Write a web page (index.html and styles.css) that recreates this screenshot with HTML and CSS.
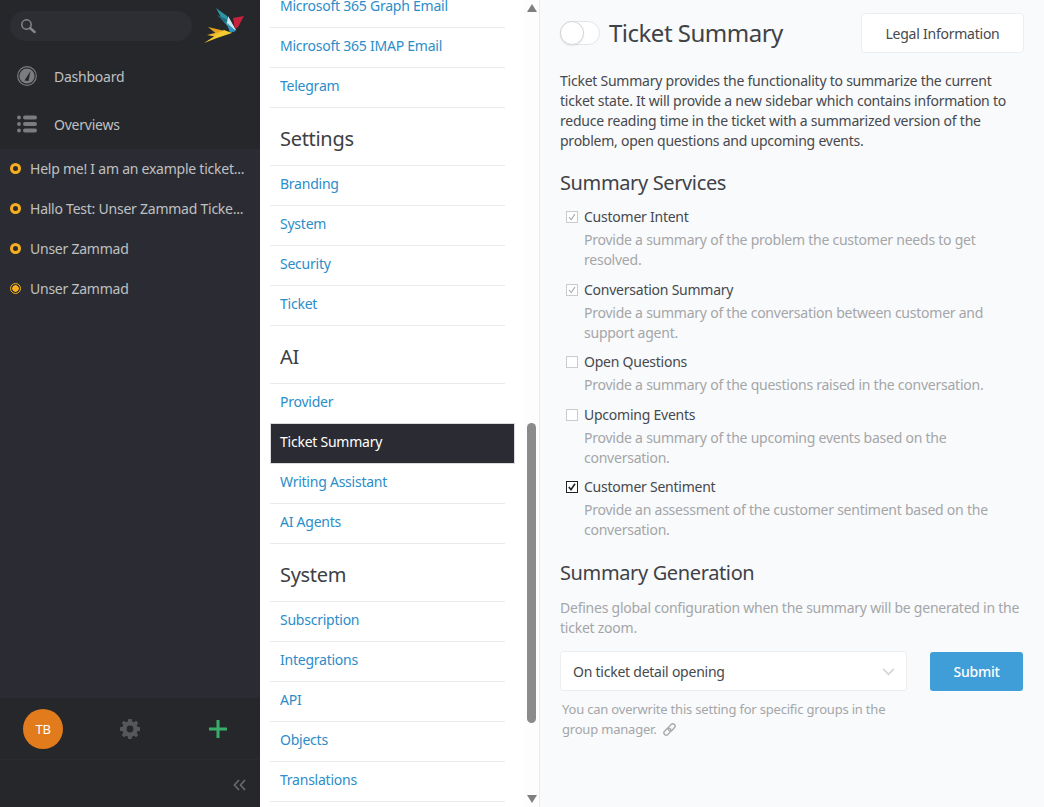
FILE: index.html
```html
<!DOCTYPE html>
<html lang="en">
<head>
<meta charset="utf-8">
<title>Ticket Summary</title>
<link rel="stylesheet" href="styles.css">
</head>
<body>
<div class="app">
  <aside class="sidebar">
    <div class="side-top">
      <div class="search-row">
        <div class="search">
          <svg class="search-icon" viewBox="0 0 16 16" width="16" height="16"><circle cx="6.500" cy="6.500" r="4.700" fill="none" stroke="#85878a" stroke-width="1.500"/><path d="M10 10l4.600 4" stroke="#85878a" stroke-width="2.400" stroke-linecap="round"/></svg>
        </div>
        <svg class="logo" viewBox="0 0 42 38" width="42" height="38">
          <path d="M13 1l11 8 3 13-7-8z" fill="#2d95a6"/>
          <path d="M14 8l11 5-3 3z" fill="#1c6f80"/>
          <path d="M25 9l8 14-6 1-3-8z" fill="#cfe8f2"/>
          <path d="M24 16l9 8-6 2z" fill="#2a94bd"/>
          <path d="M30 11l11-2-6 11-3 2z" fill="#c8203f"/>
          <path d="M5 20l17 4-7 4z" fill="#e2a21f"/>
          <path d="M4 28l16-4-6 6z" fill="#eeb92c"/>
          <path d="M1 36l20-13 8 3-15 5z" fill="#f3cb30"/>
        </svg>
      </div>
      <a class="nav-item"><svg class="nav-icon" viewBox="0 0 20 20" width="20" height="20"><circle cx="10" cy="10" r="9.300" fill="none" stroke="#7a7c80" stroke-width="1.200"/><circle cx="10" cy="10" r="7.600" fill="#7a7c80"/><path d="M7.500 14.500L13.500 5l-2 10z" fill="#26272b"/></svg><span>Dashboard</span></a>
      <a class="nav-item"><svg class="nav-icon" viewBox="0 0 20 20" width="20" height="20"><g fill="#7a7c80"><circle cx="2" cy="3.500" r="1.900"/><circle cx="2" cy="10" r="1.900"/><circle cx="2" cy="16.500" r="1.900"/><rect x="6" y="1.500" width="14" height="4" rx="2"/><rect x="6" y="8" width="14" height="4" rx="2"/><rect x="6" y="14.500" width="14" height="4" rx="2"/></g></svg><span>Overviews</span></a>
    </div>
    <div class="tickets">
      <a class="ticket"><i class="status"></i><span class="ticket-title">Help me! I am an example ticket...</span></a>
      <a class="ticket"><i class="status"></i><span class="ticket-title">Hallo Test: Unser Zammad Ticke...</span></a>
      <a class="ticket"><i class="status"></i><span class="ticket-title">Unser Zammad</span></a>
      <a class="ticket"><i class="status status-open"></i><span class="ticket-title">Unser Zammad</span></a>
    </div>
    <div class="side-actions">
      <div class="avatar">TB</div>
      <svg class="gear" viewBox="0 0 20 20" width="20" height="20"><path fill="#55575b" fill-rule="evenodd" d="M8.300 0h3.400l.5 2.600 1.700.7L16.100 1.800l2.100 2.100-1.500 2.200.7 1.700 2.600.5v3.400l-2.600.5-.7 1.700 1.500 2.200-2.100 2.100-2.200-1.500-1.700.7-.5 2.600H8.300l-.5-2.600-1.700-.7-2.200 1.500-2.100-2.100 1.500-2.200-.7-1.700L0 11.700V8.300l2.600-.5.7-1.700L1.800 3.900l2.100-2.100 2.200 1.500 1.700-.7zM10 6.600a3.400 3.400 0 1 0 0 6.800 3.400 3.400 0 0 0 0-6.800z"/></svg>
      <svg class="plus" viewBox="0 0 18 18" width="18" height="18"><path d="M9 0v18M0 9h18" stroke="#38ad69" stroke-width="3"/></svg>
    </div>
    <div class="side-collapse">
      <svg viewBox="0 0 13 12" width="13" height="12"><path d="M6 1L1.500 6 6 11M12 1L7.500 6 12 11" fill="none" stroke="#66686c" stroke-width="1.800"/></svg>
    </div>
  </aside>

  <nav class="menu">
    <div class="menu-scroll">
      <ul class="menu-list menu-first">
        <li>Microsoft 365 Graph Email</li>
        <li>Microsoft 365 IMAP Email</li>
        <li>Telegram</li>
      </ul>
      <h2 class="menu-heading">Settings</h2>
      <ul class="menu-list">
        <li>Branding</li>
        <li>System</li>
        <li>Security</li>
        <li>Ticket</li>
      </ul>
      <h2 class="menu-heading">AI</h2>
      <ul class="menu-list">
        <li>Provider</li>
        <li class="active">Ticket Summary</li>
        <li>Writing Assistant</li>
        <li>AI Agents</li>
      </ul>
      <h2 class="menu-heading">System</h2>
      <ul class="menu-list">
        <li>Subscription</li>
        <li>Integrations</li>
        <li>API</li>
        <li>Objects</li>
        <li>Translations</li>
      </ul>
    </div>
    <div class="scrollbar">
      <i class="arrow-up"></i>
      <div class="thumb-track"><div class="thumb"></div></div>
      <i class="arrow-down"></i>
    </div>
  </nav>

  <main class="content">
    <header class="page-head">
      <div class="title-wrap">
        <span class="toggle"><i></i></span>
        <h1>Ticket Summary</h1>
      </div>
      <button class="btn-legal">Legal Information</button>
    </header>
    <p class="intro">Ticket Summary provides the functionality to summarize the current ticket state. It will provide a new sidebar which contains information to reduce reading time in the ticket with a summarized version of the problem, open questions and upcoming events.</p>
    <h2 class="section">Summary Services</h2>
    <div class="options">
      <div class="option">
        <span class="check check-muted"><svg viewBox="0 0 12 12"><path d="M2.500 6l2.500 3 4.500-6.500" fill="none" stroke="#a9abae" stroke-width="1.300"/></svg></span>
        <div><div class="opt-label">Customer Intent</div><div class="opt-help">Provide a summary of the problem the customer needs to get resolved.</div></div>
      </div>
      <div class="option">
        <span class="check check-muted"><svg viewBox="0 0 12 12"><path d="M2.500 6l2.500 3 4.500-6.500" fill="none" stroke="#a9abae" stroke-width="1.300"/></svg></span>
        <div><div class="opt-label">Conversation Summary</div><div class="opt-help">Provide a summary of the conversation between customer and support agent.</div></div>
      </div>
      <div class="option">
        <span class="check check-muted"></span>
        <div><div class="opt-label">Open Questions</div><div class="opt-help">Provide a summary of the questions raised in the conversation.</div></div>
      </div>
      <div class="option">
        <span class="check check-muted"></span>
        <div><div class="opt-label">Upcoming Events</div><div class="opt-help">Provide a summary of the upcoming events based on the conversation.</div></div>
      </div>
      <div class="option">
        <span class="check check-on"><svg viewBox="0 0 12 12"><path d="M2.200 6l2.600 3.200 4.800-7" fill="none" stroke="#222" stroke-width="2"/></svg></span>
        <div><div class="opt-label">Customer Sentiment</div><div class="opt-help">Provide an assessment of the customer sentiment based on the conversation.</div></div>
      </div>
    </div>
    <h2 class="section section-gen">Summary Generation</h2>
    <p class="gen-help">Defines global configuration when the summary will be generated in the ticket zoom.</p>
    <div class="gen-row">
      <div class="select">
        <span>On ticket detail opening</span>
        <svg viewBox="0 0 12 8" width="13" height="9"><path d="M1 1.500l5 5 5-5" fill="none" stroke="#d5d7d9" stroke-width="1.600"/></svg>
      </div>
      <button class="btn-submit">Submit</button>
    </div>
    <p class="note">You can overwrite this setting for specific groups in the group manager.
      <svg viewBox="0 0 14 14" width="13" height="13"><g fill="none" stroke="#a8aaad" stroke-width="1.500" transform="rotate(-45 7 7)"><rect x="-0.500" y="4.500" width="8.500" height="5" rx="2.500"/><rect x="6" y="4.500" width="8.500" height="5" rx="2.500"/></g></svg>
    </p>
  </main>
</div>
</body>
</html>
```
FILE: styles.css
```css
* { box-sizing: border-box; }
html, body { margin: 0; height: 100%; overflow: hidden; }
body { font-family: "Noto Sans", "Open Sans", sans-serif; font-size: 14px; letter-spacing: -0.24px; color: #46494d; }
ul { list-style: none; margin: 0; padding: 0; }
h1, h2, p { margin: 0; font-weight: 400; }
button { font-family: inherit; letter-spacing: inherit; cursor: pointer; }

.app { display: flex; width: 1044px; height: 807px; overflow: hidden; }

/* Sidebar */
.sidebar { width: 260px; flex: none; display: flex; flex-direction: column; background: #2b2c33; color: #bfc0c2; }
.side-top { background: #26272b; height: 149px; flex: none; display: flex; flex-direction: column; }
.search-row { height: 52px; flex: none; display: flex; align-items: flex-start; padding: 11px 0 0 10px; }
.search { width: 182px; height: 30px; border-radius: 15px; background: #2d2e34; display: flex; align-items: center; padding-left: 10px; }
.search-icon { display: block; }
.logo { margin: -4px 0 0 11px; flex: none; }
.nav-item { display: flex; align-items: center; height: 48px; padding-left: 17px; gap: 17px; }
.tickets { flex: 1; display: flex; flex-direction: column; }
.ticket { display: flex; align-items: center; height: 40px; padding-left: 10px; gap: 9px; border-bottom: 1px solid #292a30; }
.ticket-title { white-space: nowrap; }
.status { width: 11px; height: 11px; border-radius: 50%; border: 3px solid #f6b01e; flex: none; }
.status-open { border-width: 1px; background: radial-gradient(circle, #f6b01e 0 3px, transparent 3.500px); }
.side-actions { height: 62px; background: #26272b; display: flex; align-items: center; padding-left: 23px; gap: 57px; border-bottom: 1px solid #2a2b30; flex: none; }
.avatar { width: 40px; height: 40px; border-radius: 50%; background: #e17b1b; color: #fff; font-size: 13px; display: flex; align-items: center; justify-content: center; }
.plus { margin-left: 12px; }
.side-collapse { height: 47px; background: #26272b; flex: none; display: flex; align-items: center; justify-content: flex-end; padding: 2px 14px 0 0; }

/* Menu */
.menu { width: 280px; flex: none; background: #fff; border-right: 1px solid #e8ebed; display: flex; overflow: hidden; }
.menu-scroll { width: 264px; flex: none; padding: 0 9px 0 10px; }
.menu-first { margin-top: -12px; }
.menu-list li { height: 40px; line-height: 35px; padding: 0 10px; margin-right: 10px; color: #2b8dc9; border-bottom: 1px solid #e8eaec; white-space: nowrap; }
.menu-list li.active { background: #2b2c33; color: #fff; margin: -1px 0 0 0; height: 41px; line-height: 38px; border-bottom: 0; box-shadow: 0 0 0 1px #d9dbdd inset; }
.menu-heading { font-size: 20px; letter-spacing: -0.3px; line-height: 28px; height: 58px; padding: 17px 10px 13px; color: #3d4045; border-bottom: 1px solid #e8eaec; margin-right: 10px; }
.scrollbar { width: 15px; flex: none; display: flex; flex-direction: column; align-items: center; background: #fdfdfd; padding: 4px 0; }
.thumb-track { flex: 1; width: 9px; padding-top: 411px; }
.thumb { width: 9px; height: 300px; background: #8b8b8b; border-radius: 5px; }
.arrow-up { width: 0; height: 0; border: 5px solid transparent; border-top: 0; border-bottom: 8px solid #7f7f7f; }
.arrow-down { width: 0; height: 0; border: 5px solid transparent; border-bottom: 0; border-top: 8px solid #7f7f7f; }

/* Content */
.content { flex: 1; min-width: 0; background: #f9fafb; padding: 13px 20px 0; }
.page-head { display: flex; justify-content: space-between; align-items: flex-start; height: 57px; }
.title-wrap { display: flex; align-items: center; gap: 9px; height: 40px; }
h1 { font-size: 24px; letter-spacing: -0.5px; line-height: 40px; color: #3f4247; }
.toggle { width: 40px; height: 24px; border-radius: 12px; background: #fff; border: 1px solid #e3e5e7; display: block; position: relative; }
.toggle i { position: absolute; left: -1px; top: -1px; width: 24px; height: 24px; border-radius: 50%; background: #fff; border: 1px solid #d3d5d7; display: block; box-shadow: 0 1px 2px rgba(0,0,0,.08); }
.btn-legal { width: 163px; height: 40px; background: #fff; border: 1px solid #edeef0; border-radius: 4px; font-size: 14px; color: #46494d; padding: 0; }
.intro { line-height: 20px; color: #46494d; max-width: 456px; margin-top: 1px; }
.section { font-size: 20px; letter-spacing: -0.37px; line-height: 28px; color: #3f4247; margin-top: 18px; }
.options { margin-top: 10px; }
.option { display: flex; gap: 6px; padding-left: 6px; margin-bottom: 9.500px; }
.check { width: 12px; height: 12px; flex: none; margin-top: 4px; border: 1px solid #c9cbcd; background: #fff; display: block; }
.check svg { display: block; width: 10px; height: 10px; }
.check-on { border-color: #222; }
.opt-label { line-height: 20px; color: #46494d; }
.opt-help { line-height: 20px; color: #a4a6a9; margin-top: 3px; }
.section-gen { margin-top: 19px; }
.gen-help { line-height: 20px; color: #a4a6a9; margin-top: 11px; }
.gen-row { display: flex; justify-content: space-between; align-items: flex-start; margin-top: 13px; }
.select { width: 347px; height: 40px; background: #fff; border: 1px solid #eceef0; border-radius: 3px; display: flex; align-items: center; justify-content: space-between; padding: 0 11px 0 12px; }
.btn-submit { width: 93px; height: 39px; margin: 1px 1px 0 0; background: #3f9ed8; color: #fff; border: 0; border-radius: 3px; font-size: 14px; font-weight: 500; padding: 0; }
.note { line-height: 20px; color: #a4a6a9; font-size: 13px; letter-spacing: -0.2px; margin: 8px 0 0 2px; width: 345px; }
.note svg { vertical-align: -2px; margin-left: 3px; }
```
